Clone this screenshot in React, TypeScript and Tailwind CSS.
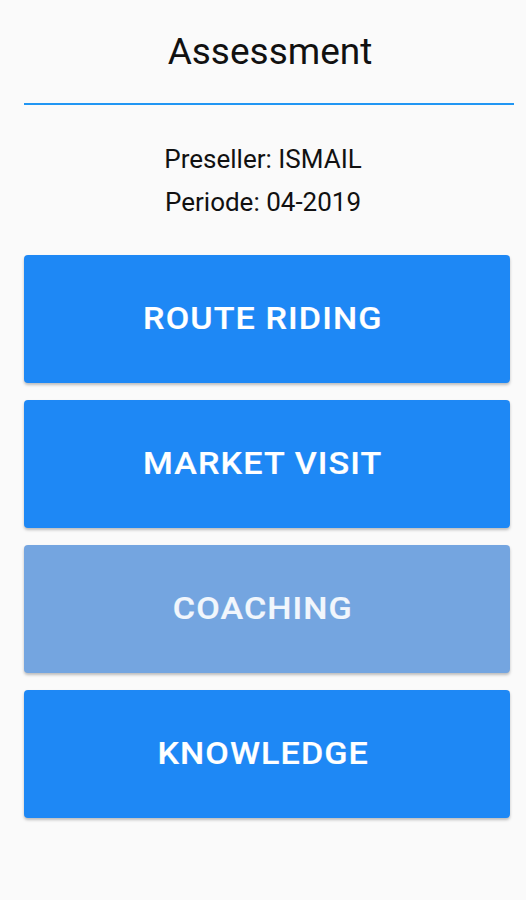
import React from "react";

const App: React.FC = () => {
  const items = [
    { label: "ROUTE RIDING", active: true },
    { label: "MARKET VISIT", active: true },
    { label: "COACHING", active: false },
    { label: "KNOWLEDGE", active: true },
  ];

  return (
    <div className="min-h-screen bg-[#fafafa] font-['Roboto',sans-serif]">
      {/* header */}
      <div className="flex flex-col items-center pt-[28px] pl-[14px]">
        <h1 className="text-[37px] leading-[48px] text-[#111]">Assessment</h1>
      </div>
      <div className="ml-[24px] w-[490px] mt-[27px] h-[2px] bg-[#2196f3]" />

      {/* info */}
      <div className="flex flex-col items-center pt-[33px] text-[26px] leading-[43px] text-[#111]">
        <p>Preseller: ISMAIL</p>
        <p>Periode: 04-2019</p>
      </div>

      {/* menu */}
      <div className="mt-[31px] ml-[24px] w-[486px] flex flex-col gap-[17px]">
        {items.map((item) => (
          <button
            key={item.label}
            className={
              item.active
                ? "h-[128px] pr-[8px] rounded-[4px] bg-[#1e88f5] text-white text-[31px] font-medium shadow-[0_2px_3px_rgba(0,0,0,0.25)]"
                : "h-[128px] pr-[8px] rounded-[4px] bg-[#74a5e0] text-white/90 text-[31px] font-medium shadow-[0_2px_3px_rgba(0,0,0,0.25)]"
            }
          >
            <span className="inline-block scale-x-[1.1] tracking-[1px] [-webkit-text-stroke:0.2px_currentColor]">
              {item.label}
            </span>
          </button>
        ))}
      </div>
    </div>
  );
};

export default App;
